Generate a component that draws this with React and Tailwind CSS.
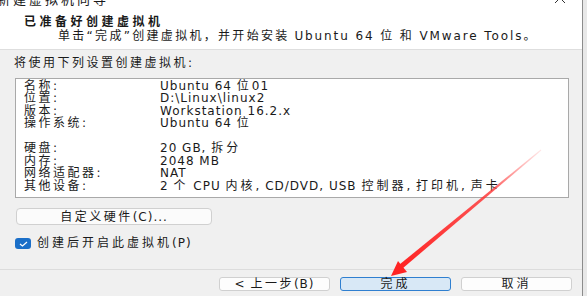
import React from "react";

const CJK = /([\u3000-\u303f\u4e00-\u9fff\uff00-\uffef]+)/;
function T({ children, cls = "tracking-[2.5px]" }) {
  return (
    <span className="whitespace-pre">
      {children.split(CJK).map((s, i) =>
        i % 2 ? (
          <span key={i} className={cls}>
            {s}
          </span>
        ) : (
          <React.Fragment key={i}>{s}</React.Fragment>
        )
      )}
    </span>
  );
}

const rows1 = [
  ["名称:", "Ubuntu 64 位01"],
  ["位置:", "D:\\Linux\\linux2"],
  ["版本:", "Workstation 16.2.x"],
  ["操作系统:", "Ubuntu 64 位"],
];
const rows2 = [
  ["硬盘:", "20 GB, 拆分"],
  ["内存:", "2048 MB"],
  ["网络适配器:", "NAT"],
  ["其他设备:", "2 个 CPU 内核, CD/DVD, USB 控制器, 打印机, 声卡"],
];

function Row({ label, value }) {
  return (
    <div className="flex h-[12.5px] items-center">
      <div className="w-[136px] shrink-0 whitespace-nowrap">
        <T>{label}</T>
      </div>
      <div className="whitespace-nowrap">
        <T cls="tracking-[3px]">{value}</T>
      </div>
    </div>
  );
}

export default function App() {
  return (
    <div className="relative w-[587px] h-[296px] overflow-hidden bg-[#e8e8e8] font-['DejaVu_Sans','Noto_Sans_CJK_SC',sans-serif] text-[12px] tracking-[1px] text-[#1a1a1a]">
      <div className="w-[583px] h-[296px] border-r border-[#8c8c8c] bg-[#f0f0f0] flex flex-col">
        {/* header */}
        <div className="bg-white h-[50px] shrink-0 border-b border-[#dedede] flex flex-col">
          <div className="h-[14px] mt-[-7px] flex items-center justify-between">
            <span className="ml-[-3px] text-[13px] tracking-[3px] leading-[14px]">新建虚拟机向导</span>
            <svg width="12" height="12" viewBox="0 0 12 12" className="mr-[16px] mt-[-4px]">
              <path d="M1 1L11 11M11 1L1 11" stroke="#333" strokeWidth="1" fill="none" />
            </svg>
          </div>
          <div className="mt-[9px] pl-[24px] h-[13px] leading-[13px] font-bold tracking-[3.5px] text-[12px] whitespace-nowrap">
            已准备好创建虚拟机
          </div>
          <div className="mt-[1px] pl-[58px] h-[13px] leading-[13px] whitespace-nowrap">
            <span className="tracking-[2.3px]">单击“完成”创建虚拟机，并开始安装</span>{" "}
            <span className="tracking-[1.9px]">Ubuntu 64 位 和 VMware Tools。</span>
          </div>
        </div>
        {/* body */}
        <div className="flex-1 flex flex-col px-[15px]">
          <div className="mt-[7px] h-[13px] leading-[13px] -ml-[1px] whitespace-nowrap">
            <T>将使用下列设置创建虚拟机:</T>
          </div>
          <div className="mt-[8px] h-[120px] w-[554px] bg-white border border-[#a9a9a9] pl-[8px] pt-[0.5px] flex flex-col">
            {rows1.map((r) => (
              <Row key={r[0]} label={r[0]} value={r[1]} />
            ))}
            <div className="h-[12.5px]" />
            {rows2.map((r) => (
              <Row key={r[0]} label={r[0]} value={r[1]} />
            ))}
          </div>
          <div className="mt-[10px] h-[17px] w-[196px] ml-[1px] rounded-[4px] border border-[#d0d0d0] bg-[#fbfbfb] flex items-center justify-center leading-none whitespace-nowrap">
            <T>自定义硬件(C)...</T>
          </div>
          <div className="mt-[12px] flex items-center gap-[6px]">
            <div className="w-[16px] h-[11px] rounded-[3px] bg-[#1b6fc8] flex items-center justify-center">
              <svg width="9" height="6" viewBox="0 0 9 6">
                <path d="M1 3L3.5 5L8 1" stroke="white" strokeWidth="1.2" fill="none" />
              </svg>
            </div>
            <span className="leading-[13px] whitespace-nowrap">
              <T cls="tracking-[3px]">创建后开启此虚拟机(P)</T>
            </span>
          </div>
        </div>
        {/* footer */}
        <div className="h-[27px] shrink-0 border-t border-[#dcdcdc] flex items-start pt-[7px] pl-[219px] gap-[10px]">
          <div className="w-[111px] h-[14px] rounded-[3px] border border-[#d0d0d0] bg-[#fdfdfd] flex items-center justify-center leading-none whitespace-nowrap">
            <T>{"< 上一步(B)"}</T>
          </div>
          <div className="w-[111px] h-[14px] rounded-[3px] border border-[#2f7fd0] bg-[#d8e8f6] flex items-center justify-center leading-none">
            <span className="tracking-[3px]">完成</span>
          </div>
          <div className="w-[111px] h-[14px] rounded-[3px] border border-[#d0d0d0] bg-[#fdfdfd] flex items-center justify-center leading-none">
            <span className="tracking-[3px]">取消</span>
          </div>
        </div>
      </div>
      {/* red arrow annotation */}
      <svg className="absolute left-0 top-0 pointer-events-none" width="587" height="296" viewBox="0 0 587 296">
        <defs>
          <linearGradient id="ag" x1="541" y1="150" x2="400" y2="268" gradientUnits="userSpaceOnUse">
            <stop offset="0" stopColor="#ff6060" stopOpacity="0.15" />
            <stop offset="0.35" stopColor="#ff3030" stopOpacity="0.8" />
            <stop offset="1" stopColor="#ff2424" stopOpacity="1" />
          </linearGradient>
        </defs>
        <polygon points="541.3,150.4 540.7,149.6 399.5,264.5 402.5,268.5" fill="url(#ag)" />
        <polygon points="391,276 398,261 407,272" fill="#ff2424" />
      </svg>
    </div>
  );
}
